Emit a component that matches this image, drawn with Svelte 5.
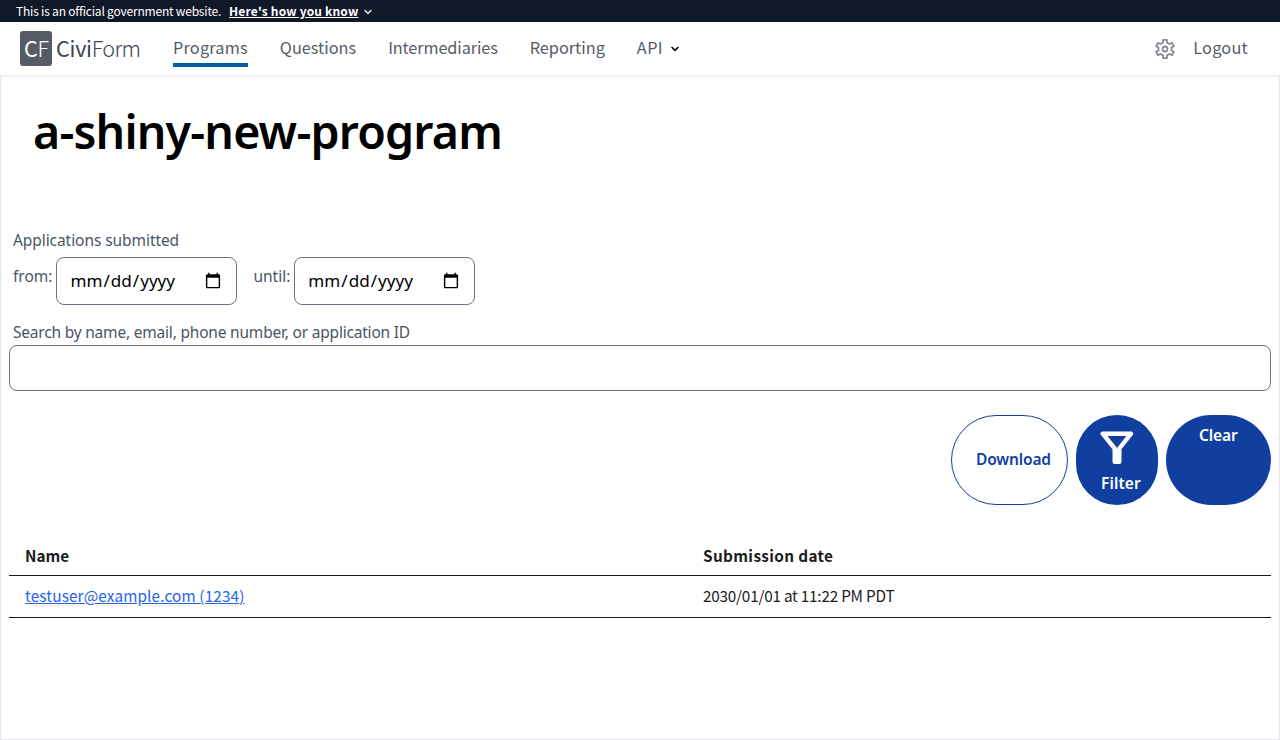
<script>
  const links = [
    { text: 'Programs', spacing: 0.2 },
    { text: 'Questions', spacing: 0 },
    { text: 'Intermediaries', spacing: -0.12 },
    { text: 'Reporting', spacing: 0 },
  ];
</script>

<div class="banner">
  <span class="official">This is an official government website.</span>
  <a href="#top">Here's how you know</a>
  <svg width="8" height="6" viewBox="0 0 8 6"><path d="M.6 1 4 4.4 7.4 1" fill="none" stroke="#dfe1e2" stroke-width="1.5" /></svg>
</div>
<header>
  <svg class="logo" width="122" height="36" viewBox="0 0 122 36">
    <rect width="32" height="35" rx="3" fill="#565c65" />
    <text x="4" y="26" fill="#fff"><tspan>C</tspan><tspan class="thin">F</tspan></text>
    <text x="36" y="26" fill="#3d4551"><tspan>Civi</tspan><tspan class="thin">Form</tspan></text>
  </svg>
  <nav>
    {#each links as link, i}
      <a href="#top" class:current={i === 0} style="letter-spacing: {link.spacing}px">{link.text}</a>
    {/each}
    <a href="#top" class="api"><span>API</span>
      <svg width="8" height="6" viewBox="0 0 8 6"><path d="M.6 1 4 4.4 7.4 1" fill="none" stroke="#000" stroke-width="1.6" /></svg></a>
  </nav>
  <svg class="gear" width="24" height="24" viewBox="-12 -12 24 24" fill="none" stroke="#878b93" stroke-width="1.8" stroke-linejoin="round">
    <path d="M-1.93-6.3V-9.1H1.93V-6.3Q3.3-5.8 4.49-4.82L6.92-6.22 8.85-2.88 6.42-1.48Q6.8 0 6.42 1.48L8.85 2.88 6.92 6.22 4.49 4.82Q3.3 5.8 1.93 6.3V9.1H-1.93V6.3Q-3.3 5.8-4.49 4.82L-6.92 6.22-8.85 2.88-6.42 1.48Q-6.8 0-6.42-1.48L-8.85-2.88-6.92-6.22-4.49-4.82Q-3.3-5.8-1.93-6.3Z" />
    <circle r="2.5" />
  </svg>
  <a class="logout" href="#top">Logout</a>
</header>
<main>
  <h1>a-shiny-new-program</h1>
  <form>
    <div class="label">Applications submitted</div>
    <div class="dates">
      <label>from:<input type="date" /></label>
      <label>until:<input type="date" /></label>
    </div>
    <label class="label search-label" for="search">Search by name, email, phone number, or application ID</label>
    <input id="search" type="text" />
    <div class="actions">
      <button type="button" class="download">Download</button>
      <button type="button" class="filter">
        <svg width="34" height="34" viewBox="0 0 34 34" fill="none" stroke="#fff" stroke-width="4.4" stroke-linejoin="round"><path d="M2.7 2.7H31L19.3 17.5V30.7H14.7V17.5Z" /><path d="M17 18V30" /></svg>
        <span>Filter</span>
      </button>
      <button type="button" class="clear">Clear</button>
    </div>
  </form>
  <table>
    <thead><tr><th>Name</th><th>Submission date</th></tr></thead>
    <tbody><tr><td><a href="#top">testuser@example.com (1234)</a></td><td class="when">2030/01/01 at 11:22 PM PDT</td></tr></tbody>
  </table>
</main>

<style>
  :global(body) { margin: 0; background: #fff; font-family: "Noto Sans CJK SC", sans-serif; }
  :global(#app) { display: flex; flex-direction: column; height: 740px; overflow: hidden; }
  * { box-sizing: border-box; }
  .banner { height: 22px; flex: none; background: #111827; color: #fff; display: flex; align-items: center; padding-left: 16px; font-size: 12px; line-height: 22px; }
  .official { letter-spacing: -.2px; }
  .banner a { color: #fff; font-weight: 700; margin-left: 8px; letter-spacing: .18px; text-underline-offset: 1px; }
  .banner svg { margin-left: 5px; margin-top: 2px; }
  header { height: 53px; flex: none; display: flex; align-items: flex-start; padding: 0 32px 0 20px; box-shadow: 0 1px 4px rgb(0 0 0 / .1); color: #565c65; }
  .logo { margin-top: 9px; font-size: 21.5px; letter-spacing: -.25px; }
  .thin { font-weight: 300; letter-spacing: -.6px; }
  nav { display: flex; gap: 32px; margin-left: 31px; }
  header a { color: #565c65; text-decoration: none; font-size: 16.3px; line-height: 20px; padding: 15px 0 6px; }
  nav .current { border-bottom: 4px solid #005ea2; }
  .api { display: flex; align-items: flex-start; gap: 8px; letter-spacing: .4px; }
  .api svg { margin-top: 9px; }
  .gear { margin: 15px 16px 0 auto; }
  .logout { letter-spacing: .25px; }
  main { flex: 1; border: 1px solid #e5e7eb; border-top: 0; padding: 0 8px; }
  h1 { margin: 0; padding: 23px 0 0 24px; height: 148px; font: 600 46.5px/66px "Noto Sans", sans-serif; letter-spacing: -.82px; color: #000; }
  form { font-family: "Noto Sans", sans-serif; color: #4b5563; }
  .label { display: block; height: 30px; padding-left: 4px; font-size: 15.5px; line-height: 34px; letter-spacing: -.07px; }
  .search-label { letter-spacing: -.2px; }
  .dates { display: flex; gap: 16px; padding: 4px 0 0 4px; font-size: 15.5px; height: 62px; }
  .dates label { display: flex; gap: 4px; line-height: 38px; }
  input { border: 1px solid #6b7280; border-radius: 8px; background: #fff; }
  .dates input { width: 181px; height: 48px; padding: 0 14px 1px 12px; font: 17.1px "Noto Sans", sans-serif; color: #000; }
  .dates input::-webkit-calendar-picker-indicator { width: 18px; height: 18px; padding: 0; position: relative; top: .5px; }
  #search { display: block; width: 100%; height: 46px; }
  .actions { display: flex; justify-content: flex-end; gap: 8px; margin-top: 24px; height: 90px; }
  button { border: 0; margin: 0; background: #113f9f; color: #fff; border-radius: 48px; font: 600 15.5px/24px "Noto Sans", sans-serif; letter-spacing: -.15px; display: flex; }
  .download { width: 117px; border: 1px solid #113f9f; background: #fff; color: #113f9f; align-items: center; padding: 0 0 2px 24px; }
  .filter { width: 82px; flex-direction: column; align-items: flex-start; padding: 16px 0 0 24px; letter-spacing: .1px; }
  .filter span { margin: 6px 0 0 1px; }
  .clear { width: 105px; padding: 8px 0 0 33px; letter-spacing: -.1px; }
  table { width: 100%; table-layout: fixed; border-collapse: collapse; margin-top: 32px; color: #1b1b1b; font-size: 15.3px; line-height: 20px; }
  th, td { text-align: left; padding: 0 16px; height: 42px; border-bottom: 1px solid #1b1b1b; }
  td { padding-bottom: 2px; letter-spacing: .15px; }
  th { height: 38px; padding-bottom: 2px; letter-spacing: .37px; }
  th:first-child { width: 678px; letter-spacing: 0; }
  td.when { letter-spacing: -.22px; }
  td a { color: #2563eb; }
</style>
